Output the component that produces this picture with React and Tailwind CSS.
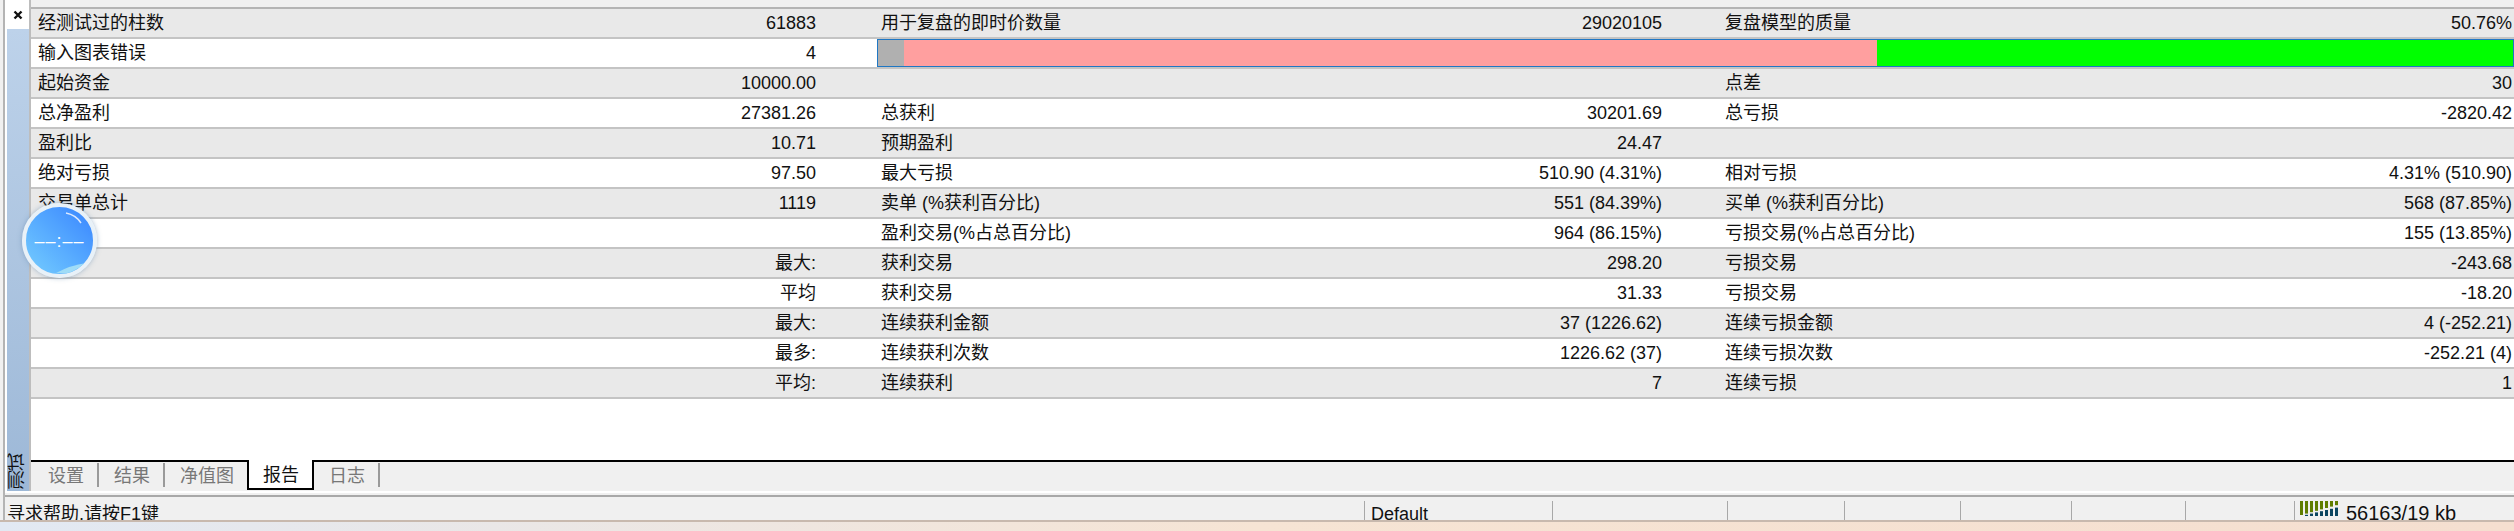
const font = { fontFamily: "'Liberation Sans', 'Noto Sans CJK SC', sans-serif" };

const rows = [
  ["经测试过的柱数", "61883", "用于复盘的即时价数量", "29020105", "复盘模型的质量", "50.76%"],
  ["输入图表错误", "4", null],
  ["起始资金", "10000.00", "", "", "点差", "30"],
  ["总净盈利", "27381.26", "总获利", "30201.69", "总亏损", "-2820.42"],
  ["盈利比", "10.71", "预期盈利", "24.47", "", ""],
  ["绝对亏损", "97.50", "最大亏损", "510.90 (4.31%)", "相对亏损", "4.31% (510.90)"],
  ["交易单总计", "1119", "卖单 (%获利百分比)", "551 (84.39%)", "买单 (%获利百分比)", "568 (87.85%)"],
  ["", "", "盈利交易(%占总百分比)", "964 (86.15%)", "亏损交易(%占总百分比)", "155 (13.85%)"],
  ["", "最大:", "获利交易", "298.20", "亏损交易", "-243.68"],
  ["", "平均", "获利交易", "31.33", "亏损交易", "-18.20"],
  ["", "最大:", "连续获利金额", "37 (1226.62)", "连续亏损金额", "4 (-252.21)"],
  ["", "最多:", "连续获利次数", "1226.62 (37)", "连续亏损次数", "-252.21 (4)"],
  ["", "平均:", "连续获利", "7", "连续亏损", "1"],
];

const tabs = ["设置", "结果", "净值图", "报告", "日志"];
const statusCells = [175, 117, 116, 111, 114, 109];

function ReportRow({ row, index }) {
  const bg = index % 2 === 0 ? "bg-[#e9e9e9]" : "bg-white";
  const firstCol = (
    <div className="w-[785px] pl-[7px] flex justify-between shrink-0">
      <span>{row[0]}</span>
      <span>{row[1]}</span>
    </div>
  );
  if (row[2] === null) {
    return (
      <div className={`flex h-[30px] border-b-2 border-[#c4c4c4] leading-[28px] ${bg}`}>
        {firstCol}
        <div className="flex-1 ml-[61px] h-[28px] border border-[#1f77c4] flex">
          <div className="w-[26px] bg-[#b0b0b0]" />
          <div className="w-[973px] bg-[#ff9f9f]" />
          <div className="flex-1 bg-[#00ff00]" />
        </div>
      </div>
    );
  }
  return (
    <div className={`flex h-[30px] border-b-2 border-[#c4c4c4] leading-[28px] ${bg}`}>
      {firstCol}
      <div className="w-[846px] pl-[65px] flex justify-between shrink-0">
        <span>{row[2]}</span>
        <span>{row[3]}</span>
      </div>
      <div className="flex-1 pl-[63px] pr-[2px] flex justify-between">
        <span>{row[4]}</span>
        <span>{row[5]}</span>
      </div>
    </div>
  );
}

function Clock() {
  return (
    <div className="absolute left-[22px] top-[203px] w-[75px] h-[75px] rounded-full border-[4px] border-[#e8f1f8] bg-gradient-to-tr from-[#76cdfd] to-[#3a83ff] shadow-[0_0_5px_rgba(90,130,170,0.5)] overflow-hidden flex items-center justify-center">
      <span className="text-white text-[18px] leading-none tracking-[1px] mt-[1px]">––:––</span>
      <svg width="67" height="67" viewBox="0 0 67 67" className="absolute inset-0">
        <path d="M40 6 Q50 8 55 16" stroke="#dbe9ff" strokeWidth="1.5" fill="none" />
        <path d="M30 66 Q45 58 60 56 L60 67 Z" fill="#9fdcf7" />
      </svg>
    </div>
  );
}

export default function App() {
  return (
    <div className="relative w-[2514px] h-[531px] overflow-hidden bg-white text-[18px] text-[#111]" style={font}>
      <div className="h-[520px] flex bg-[#f0f0f0]">
        <div className="w-[5px] shrink-0 border-r-2 border-[#b4b4b4]" />
        <div className="flex-1 min-w-0 flex flex-col">
          <div className="flex-1 flex min-h-0 bg-white">
            <div className="w-[24px] shrink-0 flex flex-col pl-[2px]">
              <div className="h-[29px] flex items-center justify-center">
                <svg width="10" height="10" viewBox="0 0 10 10">
                  <path d="M1.5 1.5 L8.5 8.5 M8.5 1.5 L1.5 8.5" stroke="#111" strokeWidth="2.4" />
                </svg>
              </div>
              <div className="flex-1 bg-gradient-to-b from-[#bdd2ea] to-[#9db8d7] flex items-end justify-center overflow-hidden">
                <span className="[writing-mode:vertical-rl] rotate-180 text-[18px] leading-none mb-[2px]">测试</span>
              </div>
            </div>
            <div className="flex-1 min-w-0 flex flex-col border-l-2 border-[#bdbdbd]">
              <div className="h-[7px] bg-[#f0f0f0]" />
              <div className="flex-1 border-t-2 border-[#b4b4b4]">
                {rows.map((row, i) => (
                  <ReportRow key={i} row={row} index={i} />
                ))}
              </div>
              <div className="h-[31px] border-t-2 border-black flex bg-[#f0f0f0] pl-[2px] text-[#777]">
                {tabs.map((tab, i) =>
                  i === 3 ? (
                    <div key={tab} className="-mt-[2px] h-[30px] pl-[14px] pr-[13px] border-2 border-t-0 border-black bg-white text-[#111] leading-[30px]">
                      {tab}
                    </div>
                  ) : (
                    <div key={tab} className={`h-[24px] mt-[1px] pl-[15px] pr-[13px] leading-[26px] ${i === 2 ? "" : "border-r-2 border-[#9a9a9a]"}`}>
                      {tab}
                    </div>
                  )
                )}
              </div>
            </div>
          </div>
          <div className="h-[6px] border-t-2 border-t-white border-b-2 border-b-[#a8a8a8] shrink-0" />
          <div className="h-[23px] flex shrink-0 pl-[2px] overflow-hidden leading-[18px]">
            <div className="w-[1357px] shrink-0 pt-[8px]">寻求帮助,请按F1键</div>
            <div className="shrink-0 w-[188px] mt-[4px] border-l border-[#a8a8a8] pl-[6px] pt-[4px]">Default</div>
            {statusCells.map((w, i) => (
              <div key={i} className="shrink-0 mt-[4px] border-l border-[#a8a8a8]" style={{ width: w }} />
            ))}
            <div className="flex-1 mt-[4px] border-l border-[#a8a8a8] flex items-start pl-[5px]">
              <svg width="38" height="15" viewBox="0 0 38 15" className="shrink-0">
                {[0, 5, 10, 15, 20, 25, 30, 35].map((x, i) => (
                  <g key={x}>
                    <rect x={x} y="0" width="3" height={14 - i * 1.4} fill="#5f7d00" />
                    <rect x={x} y={15 - i * 1.2} width="3" height={i * 1.2} fill="#0b4560" />
                  </g>
                ))}
              </svg>
              <span className="ml-[8px] text-[20px] pt-[3px]">56163/19 kb</span>
            </div>
          </div>
        </div>
      </div>
      <div className="h-[11px] border-t-2 border-[#c8b9ae] bg-gradient-to-r from-[#e2e9f3] via-[#f6e4d4] to-[#f5dfd0]" />
      <Clock />
    </div>
  );
}
